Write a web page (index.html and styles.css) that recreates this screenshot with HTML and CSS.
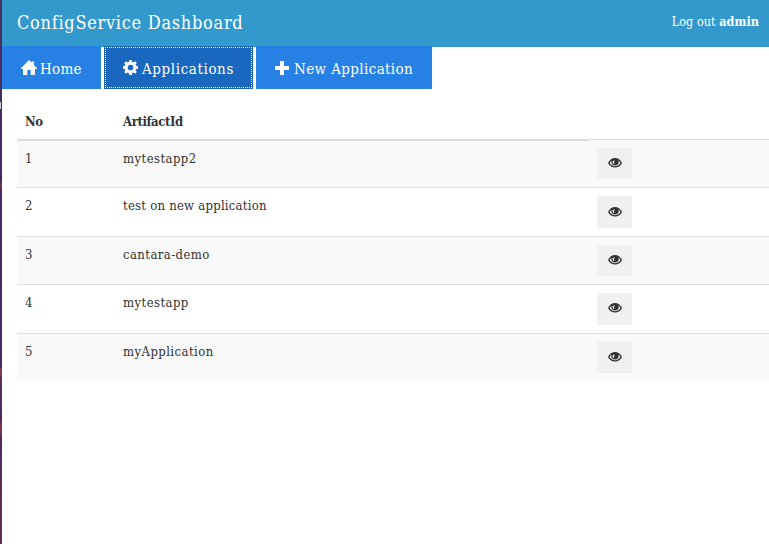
FILE: index.html
```html
<!DOCTYPE html>
<html lang="en">
<head>
<meta charset="utf-8">
<title>ConfigService Dashboard</title>
<link rel="stylesheet" href="styles.css">
</head>
<body>
<svg class="defs" width="0" height="0">
  <symbol id="eye" viewBox="0 0 14 12"><path fill-rule="evenodd" d="M0 6C3-.6 11-.6 14 6 11 12 3 12 0 6ZM1.600 6C2.500 7.900 4.700 9.200 7 9.200S11.500 7.900 12.400 6C11.900 4.900 11.200 4.100 10.400 3.500 11.400 6.200 9.700 8.500 7 8.500S2.600 6.200 3.600 3.500C2.800 4.100 2.100 4.900 1.600 6ZM5.100 3.700C4 5.400 4.900 6.900 6.400 7.100 5.800 6 5.900 4.700 6.800 3.700Z"/></symbol>
</svg>
<div class="desktop-edge"><span class="edge-mark"></span></div>
<div class="page">
  <header class="topbar">
    <h1 class="brand">ConfigService Dashboard</h1>
    <a class="logout"><span>Log out</span> <b>admin</b></a>
  </header>
  <nav class="tabs">
    <a class="tab home"><svg class="icon" width="16" height="16" viewBox="0 0 16 16"><path d="M8 0 10.800 2.800V1.500H13V5L16 8.200V9H14V15H9.700V10H6.300V15H2V9H0V8.200Z"/></svg><span>Home</span></a>
    <a class="tab apps active"><svg class="icon" width="15" height="15" viewBox="0 0 16 16"><path fill-rule="evenodd" d="M6.600 0H9.400L9.800 2.200 11 2.700 12.900 1.300 14.700 3.100 13.400 5 13.900 6.200 16 6.600V9.400L13.900 9.800 13.400 11 14.700 12.900 12.900 14.700 11 13.400 9.800 13.900 9.400 16H6.600L6.200 13.900 5 13.400 3.100 14.700 1.300 12.900 2.600 11 2.100 9.800 0 9.400V6.600L2.100 6.200 2.600 5 1.300 3.100 3.100 1.300 5 2.700 6.200 2.200ZM8 5A3 3 0 1 0 8 11 3 3 0 1 0 8 5Z"/></svg><span>Applications</span></a>
    <a class="tab new"><svg class="icon" width="14" height="14" viewBox="0 0 14 14"><path d="M5 0H9V5H14V9H9V14H5V9H0V5H5Z"/></svg><span>New Application</span></a>
  </nav>
  <main class="content">
    <div class="head">
      <span class="th">No</span><span class="th">ArtifactId</span>
    </div>
    <div class="row"><span>1</span><span class="name">mytestapp2</span><button class="view"><svg width="14" height="12"><use href="#eye"/></svg></button></div>
    <div class="row"><span>2</span><span class="name long">test on new application</span><button class="view"><svg width="14" height="12"><use href="#eye"/></svg></button></div>
    <div class="row"><span>3</span><span class="name">cantara-demo</span><button class="view"><svg width="14" height="12"><use href="#eye"/></svg></button></div>
    <div class="row"><span>4</span><span class="name">mytestapp</span><button class="view"><svg width="14" height="12"><use href="#eye"/></svg></button></div>
    <div class="row"><span>5</span><span class="name">myApplication</span><button class="view"><svg width="14" height="12"><use href="#eye"/></svg></button></div>
  </main>
</div>
</body>
</html>
```
FILE: styles.css
```css
* { box-sizing: border-box; }
body {
  margin: 0;
  height: 544px;
  display: flex;
  overflow: hidden;
  background: #fff;
  color: #333;
  font: 13px/20px "Roboto Slab", "DejaVu Serif Condensed", "DejaVu Serif", serif;
  font-stretch: condensed;
}
.defs { position: absolute; }
.desktop-edge {
  width: 2px;
  flex: none;
  padding-top: 102px;
  background: linear-gradient(#49305f, #432a63 180px, #7d3b45 186px, #452a63 190px, #44285f 366px, #8a4340 370px, #5c2e59 380px, #4b2c61 420px, #8a3b44 428px, #4d2a60 440px, #5b2d5c 480px, #65304f);
}
.edge-mark { display: block; width: 1px; height: 7px; background: #ccc; }
.page { flex: 1; min-width: 0; }
.topbar {
  height: 47px;
  padding: 0 10px 3px 15px;
  display: flex;
  align-items: center;
  justify-content: space-between;
  background: #3399cc;
  color: #fff;
  white-space: nowrap;
}
.brand { margin: 0; font-size: 18px; font-weight: 400; letter-spacing: .72px; line-height: 22px; padding-top: 1px; }
.logout { font-size: 12.500px; letter-spacing: .05px; }
.tabs { display: flex; gap: 3px; margin-top: -1px; }
.tab {
  height: 43px;
  display: flex;
  align-items: center;
  padding: 2px 0 0 19px;
  background: #2780e3;
  color: #fff;
  font-size: 15px;
  white-space: nowrap;
}
.icon { flex: none; fill: #fff; margin-right: 4px; margin-top: -2px; }
.home { width: 99px; letter-spacing: .3px; }
.home .icon { margin-right: 3px; }
.apps { width: 149px; letter-spacing: .6px; }
.new { width: 176px; letter-spacing: .38px; }
.new .icon { margin-right: 5px; }
.active { background: #1967be; outline: 1px dotted #fff; outline-offset: -2px; }
.content { padding: 13px 0 0 15px; }
.head {
  width: 572px;
  height: 39px;
  display: grid;
  grid-template-columns: 98px 1fr;
  padding: 10px 8px 0;
  border-bottom: 2px solid #ddd;
  margin-bottom: -2px;
  position: relative;
  z-index: 1;
  font-weight: 700;
  letter-spacing: -.4px;
}
.row {
  height: 48.400px;
  display: grid;
  grid-template-columns: 98px 474px 35px;
  align-items: start;
  padding: 8px 8px 0;
  border-top: 1px solid #ddd;
}
.row:nth-child(2) span { padding-top: 1px; }
.row:nth-child(even) { background: #f9f9f9; }
.name { letter-spacing: .42px; }
.name.long { letter-spacing: .23px; }
.view {
  height: 31.400px;
  padding: 0 0 1px;
  border: 0;
  display: flex;
  align-items: center;
  justify-content: center;
  background: #f1f0ef;
  fill: #333;
}
```
